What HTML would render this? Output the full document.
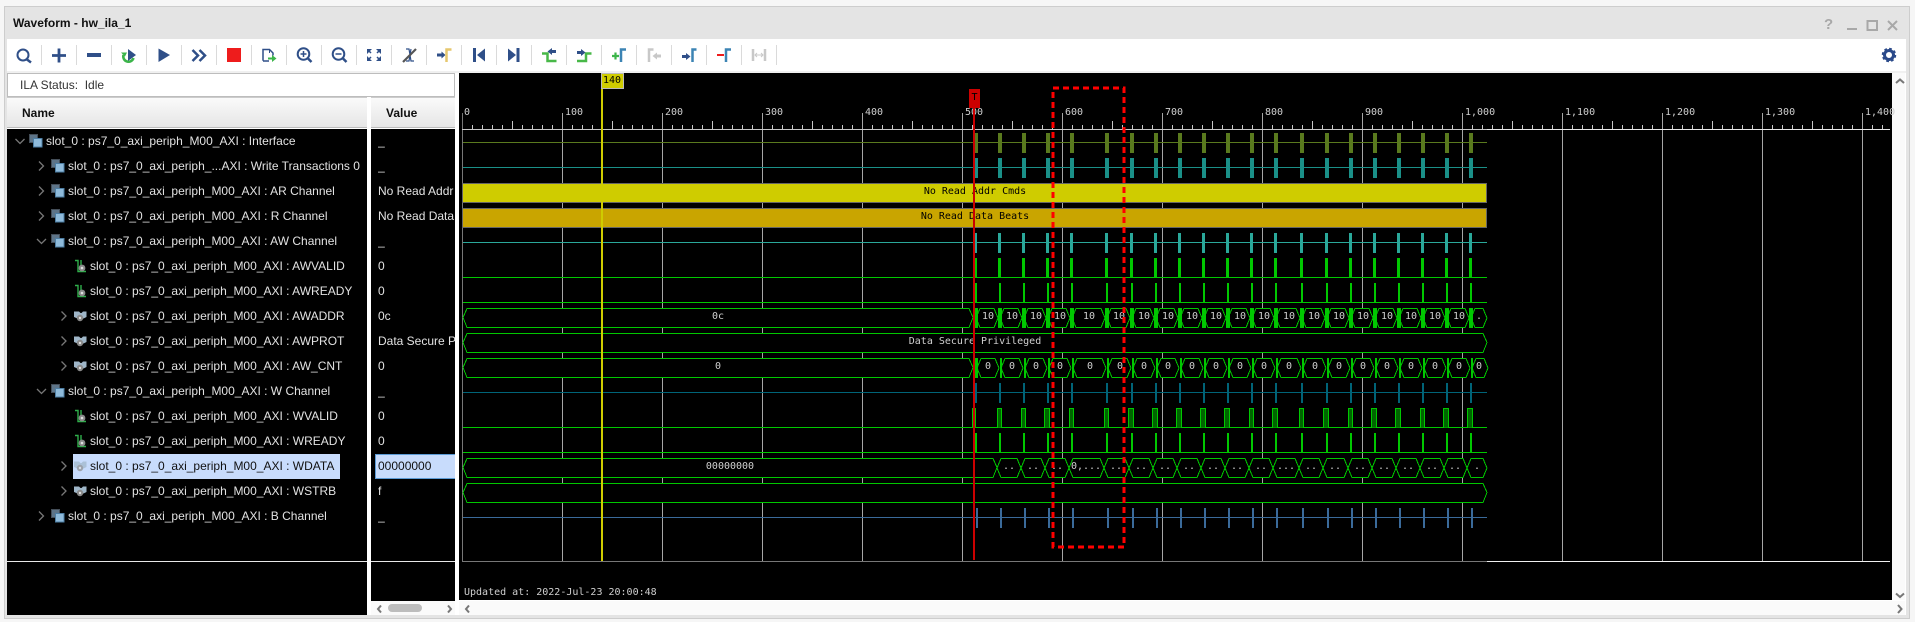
<!DOCTYPE html>
<html>
<head>
<meta charset="utf-8">
<title>Waveform - hw_ila_1</title>
<style>
html,body{margin:0;padding:0;background:#f6f6f6;}
body{width:1915px;height:622px;overflow:hidden;position:relative;font-family:"Liberation Sans",sans-serif;}
.a{position:absolute;}
.t{position:absolute;height:25px;line-height:25px;font-size:12px;color:#e2e2e2;white-space:nowrap;}
.v{position:absolute;left:378px;width:77px;overflow:hidden;height:25px;line-height:25px;font-size:12px;color:#e2e2e2;white-space:nowrap;}
svg{position:absolute;left:0;top:0;}
svg text{font-family:"DejaVu Sans Mono","Liberation Mono",monospace;font-size:10px;fill:#cfcfcf;}
</style>
</head>
<body>
<div class="a" style="left:4px;top:6px;width:1904px;height:611px;background:#e4e4e4;border:1px solid #cdcdcd;"></div>
<div class="a" style="left:13px;top:14px;font-size:12px;font-weight:bold;color:#111;line-height:18px;">Waveform - hw_ila_1</div>
<div class="a" style="left:7px;top:39px;width:1899px;height:32px;background:#fff;"></div>
<div class="a" style="left:7px;top:71px;width:1899px;height:2px;background:#f0f0f0;"></div>
<div class="a" style="left:7px;top:73px;width:1899px;height:542px;background:#fff;"></div>

<div class="a" style="left:7px;top:73px;width:446px;height:22px;border:1px solid #bdbdbd;background:#fff;font-size:12px;line-height:22px;color:#333;"><span style="margin-left:12px;white-space:pre;">ILA Status:  Idle</span></div>

<div class="a" style="left:7px;top:97px;width:360px;height:31px;background:linear-gradient(#fafafa,#e6e6e6);border-top:1px solid #ccc;box-sizing:border-box;border-bottom:1px solid #bbb;font-size:12px;font-weight:bold;color:#111;line-height:30px;"><span style="margin-left:15px;">Name</span></div>
<div class="a" style="left:371px;top:97px;width:84px;height:31px;background:linear-gradient(#fafafa,#e6e6e6);border-top:1px solid #ccc;box-sizing:border-box;border-bottom:1px solid #bbb;font-size:12px;font-weight:bold;color:#111;line-height:30px;"><span style="margin-left:15px;">Value</span></div>

<div class="a" style="left:7px;top:129px;width:360px;height:486px;background:#000;"></div>
<div class="a" style="left:371px;top:129px;width:84px;height:472px;background:#000;"></div>
<div class="a" style="left:7px;top:561px;width:360px;height:1px;background:#e8e8e8;"></div>
<div class="a" style="left:371px;top:561px;width:84px;height:1px;background:#e8e8e8;"></div>
<div class="a" style="left:459px;top:73px;width:1433px;height:527px;background:#000;"></div>
<div class="a" style="left:1892px;top:73px;width:13px;height:527px;background:#fafafa;"></div>
<div class="a" style="left:459px;top:601px;width:1446px;height:14px;background:#fafafa;"></div>
<div class="a" style="left:371px;top:601px;width:84px;height:14px;background:#fafafa;"></div>
<div class="a" style="left:388px;top:604px;width:34px;height:8px;background:#bdbdbd;border-radius:4px;"></div>

<div class="a" style="left:73px;top:454px;width:267px;height:25px;background:#c8dcfc;"></div>
<div class="a" style="left:375px;top:454px;width:80px;height:25px;box-sizing:border-box;background:#c8dcfc;border:1px solid #5b9bd5;border-right:none;"></div>

<div class="t" style="left:46px;top:129px">slot_0 : ps7_0_axi_periph_M00_AXI : Interface</div>
<div class="t" style="left:68px;top:154px">slot_0 : ps7_0_axi_periph_...AXI : Write Transactions 0</div>
<div class="t" style="left:68px;top:179px">slot_0 : ps7_0_axi_periph_M00_AXI : AR Channel</div>
<div class="t" style="left:68px;top:204px">slot_0 : ps7_0_axi_periph_M00_AXI : R Channel</div>
<div class="t" style="left:68px;top:229px">slot_0 : ps7_0_axi_periph_M00_AXI : AW Channel</div>
<div class="t" style="left:90px;top:254px">slot_0 : ps7_0_axi_periph_M00_AXI : AWVALID</div>
<div class="t" style="left:90px;top:279px">slot_0 : ps7_0_axi_periph_M00_AXI : AWREADY</div>
<div class="t" style="left:90px;top:304px">slot_0 : ps7_0_axi_periph_M00_AXI : AWADDR</div>
<div class="t" style="left:90px;top:329px">slot_0 : ps7_0_axi_periph_M00_AXI : AWPROT</div>
<div class="t" style="left:90px;top:354px">slot_0 : ps7_0_axi_periph_M00_AXI : AW_CNT</div>
<div class="t" style="left:68px;top:379px">slot_0 : ps7_0_axi_periph_M00_AXI : W Channel</div>
<div class="t" style="left:90px;top:404px">slot_0 : ps7_0_axi_periph_M00_AXI : WVALID</div>
<div class="t" style="left:90px;top:429px">slot_0 : ps7_0_axi_periph_M00_AXI : WREADY</div>
<div class="t" style="left:90px;top:454px;color:#111">slot_0 : ps7_0_axi_periph_M00_AXI : WDATA</div>
<div class="t" style="left:90px;top:479px">slot_0 : ps7_0_axi_periph_M00_AXI : WSTRB</div>
<div class="t" style="left:68px;top:504px">slot_0 : ps7_0_axi_periph_M00_AXI : B Channel</div>

<div class="v" style="top:129px">_</div>
<div class="v" style="top:154px">_</div>
<div class="v" style="top:179px">No Read Addr Cmds</div>
<div class="v" style="top:204px">No Read Data Beats</div>
<div class="v" style="top:229px">_</div>
<div class="v" style="top:254px">0</div>
<div class="v" style="top:279px">0</div>
<div class="v" style="top:304px">0c</div>
<div class="v" style="top:329px">Data Secure Privileged</div>
<div class="v" style="top:354px">0</div>
<div class="v" style="top:379px">_</div>
<div class="v" style="top:404px">0</div>
<div class="v" style="top:429px">0</div>
<div class="v" style="top:454px;color:#111">00000000</div>
<div class="v" style="top:479px">f</div>
<div class="v" style="top:504px">_</div>

<div class="a" style="left:1824px;top:16px;font-size:15px;font-weight:bold;color:#a8a8a8;line-height:18px;">?</div>

<svg width="1915" height="622" viewBox="0 0 1915 622">
<defs>
<path id="p" d="M976 0v20M1000 0v20M1024 0v20M1048 0v20M1072 0v20M1107 0v20M1132 0v20M1156 0v20M1180 0v20M1204 0v20M1228 0v20M1252 0v20M1276 0v20M1302 0v20M1327 0v20M1351 0v20M1375 0v20M1399 0v20M1423 0v20M1447 0v20M1471 0v20"/>
<path id="h" d="M976 9.5 980 0H994L998 9.5 994 19H980ZM1000 9.5 1004 0H1018L1022 9.5 1018 19H1004ZM1024 9.5 1028 0H1042L1046 9.5 1042 19H1028ZM1048 9.5 1052 0H1066L1070 9.5 1066 19H1052ZM1072 9.5 1076 0H1101L1105 9.5 1101 19H1076ZM1107 9.5 1111 0H1126L1130 9.5 1126 19H1111ZM1132 9.5 1136 0H1150L1154 9.5 1150 19H1136ZM1156 9.5 1160 0H1174L1178 9.5 1174 19H1160ZM1180 9.5 1184 0H1198L1202 9.5 1198 19H1184ZM1204 9.5 1208 0H1222L1226 9.5 1222 19H1208ZM1228 9.5 1232 0H1246L1250 9.5 1246 19H1232ZM1252 9.5 1256 0H1270L1274 9.5 1270 19H1256ZM1276 9.5 1280 0H1296L1300 9.5 1296 19H1280ZM1302 9.5 1306 0H1321L1325 9.5 1321 19H1306ZM1327 9.5 1331 0H1345L1349 9.5 1345 19H1331ZM1351 9.5 1355 0H1369L1373 9.5 1369 19H1355ZM1375 9.5 1379 0H1393L1397 9.5 1393 19H1379ZM1399 9.5 1403 0H1417L1421 9.5 1417 19H1403ZM1423 9.5 1427 0H1441L1445 9.5 1441 19H1427ZM1447 9.5 1451 0H1465L1469 9.5 1465 19H1451ZM1471 9.5 1475 0H1483L1487 9.5 1483 19H1475Z"/>
<g id="gi"><rect x="-6.5" y="-6.5" width="8" height="8" fill="#5d7488" stroke="#444e58"/><rect x="-2.5" y="-2.5" width="8.5" height="8.5" fill="#8fbbdb" stroke="#4d7ea3"/></g>
<g id="si"><path d="M-7 -5.500h3v11h8M-1 -6v6" fill="none" stroke="#2fae4a" stroke-width="1.400"/><circle cx="0" cy="2" r="3.400" fill="#8a8a8a"/><circle cx="0" cy="2" r="1.300" fill="#ddd"/></g>
<g id="bi"><path d="M-8 -4.500h5l1.500 1.500h1l1.500-1.500h3.500v5.500l-3 1.500h-6l-3.500-1.500z" fill="#9fb6c8"/><circle cx="-2" cy="2" r="3.200" fill="#8a8a8a"/><circle cx="-2" cy="2" r="1.200" fill="#e0e0e0"/></g>
<path id="cr" d="M-2.500 -4.500 2 0 -2.500 4.500" fill="none" stroke="#777" stroke-width="1.300"/>
<path id="cd" d="M-4.500 -2 0 2.500 4.500 -2" fill="none" stroke="#777" stroke-width="1.300"/>
</defs>

<!-- toolbar separators -->
<path shape-rendering="crispEdges" stroke="#dadada" fill="none" d="M41.500 45v20M76.500 45v20M111.500 45v20M146.500 45v20M181.500 45v20M216.500 45v20M251.500 45v20M286.500 45v20M321.500 45v20M356.500 45v20M391.500 45v20M426.500 45v20M461.500 45v20M496.500 45v20M531.500 45v20M566.500 45v20M601.500 45v20M636.500 45v20M671.500 45v20M706.500 45v20M741.500 45v20M776.500 45v20"/>

<!-- toolbar icons -->
<g fill="none" stroke="#2f4f88" stroke-width="2">
<circle cx="23" cy="55" r="5.500"/><path d="M27 59.500l4 3" stroke-width="2.500"/>
<path d="M52 55.500h14M59 48.500v14" stroke-width="2.800"/>
<path d="M87 55h14" stroke-width="4"/>
<path d="M123.500 55a5 5 0 1 0 10 3" stroke="#3cb54a" stroke-width="2.600"/><path d="M121 52.500l4 4 2-4z" fill="#3cb54a" stroke="none"/>
<path d="M128 49l8 6-8 6z" fill="#2f4f88" stroke="none"/>
<path d="M158.500 48.500 170 55 158.500 62z" fill="#2f4f88" stroke="none"/>
<path d="M192.500 50l5.500 5.500-5.500 5.500M199.500 50l5.500 5.500-5.500 5.500" stroke-width="2.500"/>
<path d="M263 60.800V49.500h6.500l3.500 3.500v2.500M263 61h6" stroke-width="1.500"/><path d="M269.500 53V49.500" stroke-width="1"/>
<path d="M268 58.500h5" stroke="#3cb54a" stroke-width="2"/><path d="M272 55l4.500 3.500-4.500 3.500z" fill="#3cb54a" stroke="none"/>
<circle cx="303.500" cy="54" r="5.800"/><path d="M300.500 54h6M303.500 51v6" stroke-width="1.500"/><path d="M308 58.500l3.500 3.500" stroke-width="2.500"/>
<circle cx="338.500" cy="54" r="5.800"/><path d="M335.500 54h6" stroke-width="1.500"/><path d="M343 58.500l3.500 3.500" stroke-width="2.500"/>
<path d="M367 54v-5h5zM381 54v-5h-5zM367 56v5h5zM381 56v5h-5z" fill="#2f4f88" stroke="none"/><path d="M368 50l3 3M380 50l-3 3M368 60l3-3M380 60l-3-3" stroke-width="1.500"/>
<path d="M406 49h3l2 12h3M406 61h3l2-12" stroke-width="1.200"/><path d="M403 62 416 49" stroke="#555" stroke-width="2.200"/>
<path d="M437 55h5" stroke-width="3"/><path d="M441.500 51.500l4 3.500-4 3.500z" fill="#2f4f88" stroke="none"/><path d="M446.500 62V49.500h5" stroke="#e6c76e" stroke-width="2.500"/>
<path d="M474.500 48v14" stroke-width="3"/><path d="M485 48.500 477 55l8 6.500z" fill="#2f4f88" stroke="none"/>
<path d="M518 48v14" stroke-width="3"/><path d="M508 48.500 516 55l-8 6.500z" fill="#2f4f88" stroke="none"/>
<path d="M542 53.500h5.500V61h9" stroke="#48b848" stroke-width="2.500"/><path d="M556 51.500h-5" stroke-width="3"/><path d="M552 48l-4.500 3.500 4.500 3.500z" fill="#2f4f88" stroke="none"/>
<path d="M577 61h9v-7.500h5.500" stroke="#48b848" stroke-width="2.500"/><path d="M577 52.500h5" stroke-width="3"/><path d="M581 49l4.500 3.500-4.500 3.500z" fill="#2f4f88" stroke="none"/>
<path d="M612 56h7M615.500 52.500v7" stroke="#3cb54a" stroke-width="2.200"/><path d="M621 62V49.500h5" stroke="#3c84b4" stroke-width="2.500"/>
<path d="M649 62V49.500h4.500" stroke="#c8c8c8" stroke-width="2.500"/><path d="M661 56h-5" stroke="#c8c8c8" stroke-width="3"/><path d="M657 52.500l-4.500 3.500 4.500 3.500z" fill="#c8c8c8" stroke="none"/>
<path d="M682 56.500h5" stroke-width="3"/><path d="M686 53l4.500 3.500-4.500 3.500z" fill="#2f4f88" stroke="none"/><path d="M692.500 62V49.500h4" stroke="#3c84b4" stroke-width="2.500"/>
<path d="M717 55h7" stroke="#ee1c1c" stroke-width="2"/><path d="M726 62V49.500h5" stroke="#3c84b4" stroke-width="2.500"/>
<path d="M753 49v12M765 49v12" stroke="#c8c8c8" stroke-width="2.500"/><path d="M755 55h8M757 53l-2 2 2 2M761 53l2 2-2 2" stroke="#c8c8c8" stroke-width="1"/>
</g>
<rect x="227" y="48" width="14" height="14" fill="#ee1c1c"/>

<!-- gear -->
<circle cx="1889" cy="55" r="4.500" fill="none" stroke="#2b4a8a" stroke-width="3"/>
<circle cx="1889" cy="55" r="6" fill="none" stroke="#2b4a8a" stroke-width="2.500" stroke-dasharray="2.600 2.100"/>

<!-- window controls -->
<g fill="none" stroke="#a8a8a8" stroke-width="2">
<path d="M1847 29h10"/><rect x="1867.500" y="21" width="9.500" height="9"/><path d="M1888 21l9 9M1897 21l-9 9"/>
</g>

<!-- scroll arrows -->
<g fill="none" stroke="#777" stroke-width="2">
<path d="M381 605.500l-3 3.500 3 3.500M448 605.500l3 3.500-3 3.500M469 605.500l-3 3.500 3 3.500M1898 605l3.500 4-3.500 4M1896 83l4-3.500 4 3.500M1896 593.500l4 3.500 4-3.500"/>
</g>

<!-- tree icons -->
<use href="#cd" x="20" y="141"/><use href="#gi" x="36" y="141"/>
<use href="#cr" x="41.500" y="166"/><use href="#gi" x="58" y="166"/>
<use href="#cr" x="41.500" y="191"/><use href="#gi" x="58" y="191"/>
<use href="#cr" x="41.500" y="216"/><use href="#gi" x="58" y="216"/>
<use href="#cd" x="41.500" y="241"/><use href="#gi" x="58" y="241"/>
<use href="#si" x="82" y="266"/><use href="#si" x="82" y="291"/>
<use href="#cr" x="64" y="316"/><use href="#bi" x="82" y="316"/>
<use href="#cr" x="64" y="341"/><use href="#bi" x="82" y="341"/>
<use href="#cr" x="64" y="366"/><use href="#bi" x="82" y="366"/>
<use href="#cd" x="41.500" y="391"/><use href="#gi" x="58" y="391"/>
<use href="#si" x="82" y="416"/><use href="#si" x="82" y="441"/>
<use href="#cr" x="64" y="466"/><use href="#bi" x="82" y="466" opacity=".7"/>
<use href="#cr" x="64" y="491"/><use href="#bi" x="82" y="491"/>
<use href="#cr" x="41.500" y="516"/><use href="#gi" x="58" y="516"/>

<!-- waveform -->
<g shape-rendering="crispEdges">
<!-- grid -->
<path stroke="#a6a6a6" fill="none" d="M562.500 113V561M662.500 113V561M762.500 113V561M862.500 113V561M962.500 113V561M1062.500 113V561M1162.500 113V561M1262.500 113V561M1362.500 113V561M1462.500 113V561M1562.500 113V561M1662.500 113V561M1762.500 113V561M1862.500 113V561"/>
<path stroke="#777" fill="none" d="M462.500 113V561"/>
<!-- ruler -->
<path stroke="#c8c8c8" fill="none" d="M462 129.500H1490"/>
<path stroke="#e8e8e8" fill="none" d="M1487 129.500H1890"/>
<path stroke="#777" fill="none" d="M462 561.500H1487"/>
<path stroke="#f0f0f0" fill="none" d="M1487 561.500H1890"/>
<path stroke="#c8c8c8" fill="none" d="M472.500 125v4M482.500 125v4M492.500 125v4M502.500 125v4M522.500 125v4M532.500 125v4M542.500 125v4M552.500 125v4M512.500 121v8M572.500 125v4M582.500 125v4M592.500 125v4M602.500 125v4M622.500 125v4M632.500 125v4M642.500 125v4M652.500 125v4M612.500 121v8M672.500 125v4M682.500 125v4M692.500 125v4M702.500 125v4M722.500 125v4M732.500 125v4M742.500 125v4M752.500 125v4M712.500 121v8M772.500 125v4M782.500 125v4M792.500 125v4M802.500 125v4M822.500 125v4M832.500 125v4M842.500 125v4M852.500 125v4M812.500 121v8M872.500 125v4M882.500 125v4M892.500 125v4M902.500 125v4M922.500 125v4M932.500 125v4M942.500 125v4M952.500 125v4M912.500 121v8M972.500 125v4M982.500 125v4M992.500 125v4M1002.500 125v4M1022.500 125v4M1032.500 125v4M1042.500 125v4M1052.500 125v4M1012.500 121v8M1072.500 125v4M1082.500 125v4M1092.500 125v4M1102.500 125v4M1122.500 125v4M1132.500 125v4M1142.500 125v4M1152.500 125v4M1112.500 121v8M1172.500 125v4M1182.500 125v4M1192.500 125v4M1202.500 125v4M1222.500 125v4M1232.500 125v4M1242.500 125v4M1252.500 125v4M1212.500 121v8M1272.500 125v4M1282.500 125v4M1292.500 125v4M1302.500 125v4M1322.500 125v4M1332.500 125v4M1342.500 125v4M1352.500 125v4M1312.500 121v8M1372.500 125v4M1382.500 125v4M1392.500 125v4M1402.500 125v4M1422.500 125v4M1432.500 125v4M1442.500 125v4M1452.500 125v4M1412.500 121v8M1472.500 125v4M1482.500 125v4M1492.500 125v4M1502.500 125v4M1522.500 125v4M1532.500 125v4M1542.500 125v4M1552.500 125v4M1512.500 121v8M1572.500 125v4M1582.500 125v4M1592.500 125v4M1602.500 125v4M1622.500 125v4M1632.500 125v4M1642.500 125v4M1652.500 125v4M1612.500 121v8M1672.500 125v4M1682.500 125v4M1692.500 125v4M1702.500 125v4M1722.500 125v4M1732.500 125v4M1742.500 125v4M1752.500 125v4M1712.500 121v8M1772.500 125v4M1782.500 125v4M1792.500 125v4M1802.500 125v4M1822.500 125v4M1832.500 125v4M1842.500 125v4M1852.500 125v4M1812.500 121v8M1872.500 125v4M1882.500 125v4"/>

<!-- row 0,1 -->
<path stroke="#5a7a1e" d="M463 142.500H1487"/><use href="#p" y="133" stroke="#5a7a1e" stroke-width="4"/>
<path stroke="#1a9088" d="M463 167.500H1487"/><use href="#p" y="158" stroke="#1a9088" stroke-width="4"/>
<!-- row 2,3 -->
<rect x="462.500" y="183.500" width="1024" height="19" fill="#cfcc00" stroke="#666"/>
<rect x="462.500" y="208.500" width="1024" height="19" fill="#c9a500" stroke="#666"/>
<!-- row 4 -->
<path stroke="#2aa89a" d="M463 242.500H1487"/><use href="#p" x="-.5" y="233" stroke="#2aa89a" stroke-width="3"/>
<!-- row 5,6 -->
<path stroke="#00c800" d="M463 277.500H1487M463 302.500H1487"/>
<use href="#p" x="-.5" y="258" stroke="#00c800" stroke-width="3"/>
<use href="#p" y="283" stroke="#00c800" stroke-width="2"/>
<!-- row 7 -->
<path fill="#000" stroke="#00c800" d="M463 317.500 467 308.500H969L973 317.500 969 327.500H467Z"/>
<use href="#h" y="308.500" fill="#000" stroke="#00c800"/>
<use href="#p" y="308" stroke="#00c800" stroke-width="4"/>
<!-- row 8 -->
<path fill="#000" stroke="#00c800" d="M463 342.500 467 333.500H1483L1487 342.500 1483 352.500H467Z"/>
<!-- row 9 -->
<path fill="#000" stroke="#00c800" d="M463 367.500 467 358.500H969L973 367.500 969 377.500H467Z"/>
<use href="#h" x="1" y="358.500" fill="#000" stroke="#00c800"/>
<use href="#p" x="1" y="358" stroke="#00c800" stroke-width="2"/>
<rect x="975" y="358" width="3" height="20" fill="#00c800"/>
<!-- row 10 -->
<path stroke="#006478" d="M463 392.500H1487"/><use href="#p" y="383" stroke="#006478" stroke-width="2"/>
<!-- row 11 -->
<path stroke="#00c800" d="M463 427.500H1487"/>
<path fill="#006400" stroke="#00c800" d="M972.500 427.500V408.500H975.500V427.500M997.500 427.500V408.500H1001.500V427.500M1021.500 427.500V408.500H1025.500V427.500M1044.500 427.500V408.500H1049.500V427.500M1069.500 427.500V408.500H1073.500V427.500M1104.500 427.500V408.500H1108.500V427.500M1128.500 427.500V408.500H1133.500V427.500M1152.500 427.500V408.500H1157.500V427.500M1176.500 427.500V408.500H1181.500V427.500M1200.500 427.500V408.500H1205.500V427.500M1224.500 427.500V408.500H1229.500V427.500M1249.500 427.500V408.500H1253.500V427.500M1272.500 427.500V408.500H1277.500V427.500M1299.500 427.500V408.500H1303.500V427.500M1323.500 427.500V408.500H1328.500V427.500M1348.500 427.500V408.500H1352.500V427.500M1371.500 427.500V408.500H1376.500V427.500M1395.500 427.500V408.500H1400.500V427.500M1420.500 427.500V408.500H1424.500V427.500M1443.500 427.500V408.500H1448.500V427.500M1467.500 427.500V408.500H1472.500V427.500"/>
<!-- row 12 -->
<path stroke="#00c800" d="M463 452.500H1487"/><use href="#p" y="433" stroke="#00c800" stroke-width="2"/>
<!-- row 13 -->
<path fill="#000" stroke="#00c800" d="M463 467.500 467 458.500H993L997 467.500 993 477.500H467ZM997 468 1001 458.500H1017L1021 468 1017 477.500H1001ZM1021 468 1025 458.500H1041L1045 468 1041 477.500H1025ZM1045 468 1049 458.500H1065L1069 468 1065 477.500H1049ZM1069 468 1073 458.500H1100L1104 468 1100 477.500H1073ZM1104 468 1108 458.500H1125L1129 468 1125 477.500H1108ZM1129 468 1133 458.500H1149L1153 468 1149 477.500H1133ZM1153 468 1157 458.500H1173L1177 468 1173 477.500H1157ZM1177 468 1181 458.500H1197L1201 468 1197 477.500H1181ZM1201 468 1205 458.500H1221L1225 468 1221 477.500H1205ZM1225 468 1229 458.500H1245L1249 468 1245 477.500H1229ZM1249 468 1253 458.500H1269L1273 468 1269 477.500H1253ZM1273 468 1277 458.500H1295L1299 468 1295 477.500H1277ZM1299 468 1303 458.500H1319L1323 468 1319 477.500H1303ZM1323 468 1327 458.500H1344L1348 468 1344 477.500H1327ZM1348 468 1352 458.500H1368L1372 468 1368 477.500H1352ZM1372 468 1376 458.500H1392L1396 468 1392 477.500H1376ZM1396 468 1400 458.500H1416L1420 468 1416 477.500H1400ZM1420 468 1424 458.500H1440L1444 468 1440 477.500H1424ZM1444 468 1448 458.500H1463L1467 468 1463 477.500H1448ZM1467 468 1471 458.500H1483L1487 468 1483 477.500H1471Z"/>
<!-- row 14 -->
<path fill="#000" stroke="#00c800" d="M463 492.500 467 483.500H1483L1487 492.500 1483 502.500H467Z"/>
<!-- row 15 -->
<path stroke="#3a6a9a" d="M463 517.500H1487"/><use href="#p" x="1" y="508" stroke="#3a6a9a" stroke-width="2"/>
</g>

<!-- ruler labels -->
<text x="464" y="115">0</text><text x="565" y="115">100</text><text x="665" y="115">200</text><text x="765" y="115">300</text><text x="865" y="115">400</text><text x="965" y="115">500</text><text x="1065" y="115">600</text><text x="1165" y="115">700</text><text x="1265" y="115">800</text><text x="1365" y="115">900</text><text x="1465" y="115">1,000</text><text x="1565" y="115">1,100</text><text x="1665" y="115">1,200</text><text x="1765" y="115">1,300</text><text x="1865" y="115">1,400</text>

<!-- bus labels -->
<text x="975" y="194" text-anchor="middle" style="fill:#000">No Read Addr Cmds</text>
<text x="975" y="219" text-anchor="middle" style="fill:#000">No Read Data Beats</text>
<text x="975" y="344" text-anchor="middle">Data Secure Privileged</text>
<text x="718" y="319" text-anchor="middle">0c</text>
<text x="718" y="369" text-anchor="middle">0</text>
<text x="730" y="469" text-anchor="middle">00000000</text>
<g text-anchor="middle">
<text x="988" y="319">10</text><text x="1012" y="319">10</text><text x="1036" y="319">10</text><text x="1060" y="319">10</text><text x="1089" y="319">10</text><text x="1119" y="319">10</text><text x="1144" y="319">10</text><text x="1168" y="319">10</text><text x="1192" y="319">10</text><text x="1216" y="319">10</text><text x="1240" y="319">10</text><text x="1264" y="319">10</text><text x="1289" y="319">10</text><text x="1314" y="319">10</text><text x="1339" y="319">10</text><text x="1363" y="319">10</text><text x="1387" y="319">10</text><text x="1411" y="319">10</text><text x="1435" y="319">10</text><text x="1459" y="319">10</text><text x="1479" y="319">.</text>
<text x="988" y="369">0</text><text x="1012" y="369">0</text><text x="1036" y="369">0</text><text x="1060" y="369">0</text><text x="1090" y="369">0</text><text x="1120" y="369">0</text><text x="1144" y="369">0</text><text x="1168" y="369">0</text><text x="1192" y="369">0</text><text x="1216" y="369">0</text><text x="1240" y="369">0</text><text x="1264" y="369">0</text><text x="1289" y="369">0</text><text x="1315" y="369">0</text><text x="1339" y="369">0</text><text x="1363" y="369">0</text><text x="1387" y="369">0</text><text x="1411" y="369">0</text><text x="1435" y="369">0</text><text x="1459" y="369">0</text><text x="1479" y="369">0</text>
<text x="1009" y="469">..</text><text x="1033" y="469">..</text><text x="1057" y="469">..</text><text x="1086" y="469">0,...</text><text x="1116" y="469">..</text><text x="1141" y="469">..</text><text x="1165" y="469">..</text><text x="1189" y="469">..</text><text x="1213" y="469">..</text><text x="1237" y="469">..</text><text x="1261" y="469">..</text><text x="1286" y="469">...</text><text x="1311" y="469">..</text><text x="1335" y="469">..</text><text x="1360" y="469">..</text><text x="1384" y="469">..</text><text x="1408" y="469">..</text><text x="1432" y="469">..</text><text x="1455" y="469">..</text><text x="1477" y="469">.</text>
</g>
<text x="464" y="595">Updated at: 2022-Jul-23 20:00:48</text>

<!-- cursors -->
<g shape-rendering="crispEdges">
<rect x="601" y="88" width="2" height="473" fill="#cfcc00"/>
<rect x="601.500" y="73.500" width="22" height="15" fill="#cfcc00" stroke="#bbb"/>
<rect x="973" y="100" width="2" height="460" fill="#cc0000"/>
<rect x="969" y="89" width="11" height="19" fill="#cc0000"/>
<path d="M1053 88H1124V547H1053Z" fill="none" stroke="#f00" stroke-width="3" stroke-dasharray="6 4"/>
</g>
<text x="603" y="83" style="fill:#000">140</text>
<text x="971.500" y="100" style="fill:#000">T</text>
</svg>
</body>
</html>
